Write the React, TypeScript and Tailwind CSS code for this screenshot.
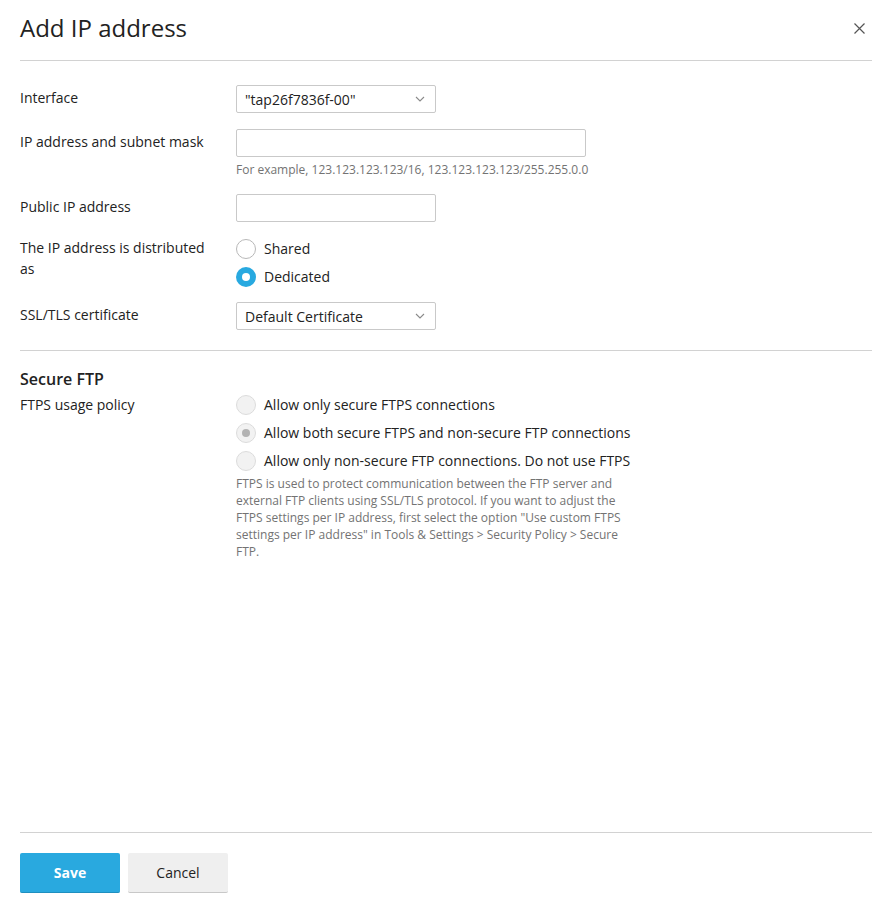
import React from "react";

const font = { fontFamily: '"Open Sans", "Noto Sans", sans-serif' };

function Chevron() {
  return (
    <svg width="10" height="6" viewBox="0 0 10 6" className="text-[#8a8a8a]">
      <path d="M1 1l4 4 4-4" fill="none" stroke="currentColor" strokeWidth="1.1" />
    </svg>
  );
}

function Select({ value }: { value: string }) {
  return (
    <div className="w-[200px] h-[28px] border border-[#c9c9c9] rounded-[2px] bg-white flex items-center justify-between pl-2 pr-[10px] text-[14px] text-[#222]">
      <span>{value}</span>
      <Chevron />
    </div>
  );
}

function Radio({ state }: { state: "off" | "on" | "disabled" | "disabledOn" }) {
  if (state === "on") {
    return (
      <span className="w-5 h-5 rounded-full bg-[#28a9e0] flex items-center justify-center shrink-0">
        <span className="w-[8px] h-[8px] rounded-full bg-white" />
      </span>
    );
  }
  if (state === "off") {
    return <span className="w-5 h-5 rounded-full border border-[#b8b8b8] bg-white shrink-0" />;
  }
  return (
    <span className="w-5 h-5 rounded-full border border-[#dcdcdc] bg-[#f2f2f2] flex items-center justify-center shrink-0">
      {state === "disabledOn" && <span className="w-[8px] h-[8px] rounded-full bg-[#b3b3b3]" />}
    </span>
  );
}

function RadioRow({ state, label }: { state: "off" | "on" | "disabled" | "disabledOn"; label: string }) {
  return (
    <div className="flex items-center h-5 gap-[8px] text-[14px] text-[#222]">
      <Radio state={state} />
      <span className="leading-5">{label}</span>
    </div>
  );
}

export default function App() {
  return (
    <div style={font} className="h-[904px] w-[878px] bg-white flex flex-col pl-5 pr-[6px] text-[#222]">
      <div className="flex items-start justify-between pt-3 pb-4 border-b border-[#d2d2d2]">
        <h1 className="text-[24px] leading-[32px] font-normal">Add IP address</h1>
        <button className="mt-[11px] mr-[7px] text-[#555]" aria-label="Close">
          <svg width="11" height="11" viewBox="0 0 11 11">
            <path d="M0.5 0.5l10 10M10.5 0.5l-10 10" stroke="currentColor" strokeWidth="1.2" fill="none" />
          </svg>
        </button>
      </div>

      <div className="flex-1 flex flex-col">
        <div className="flex flex-col gap-4 pt-6 pb-5 border-b border-[#d2d2d2] text-[14px]">
          <div className="flex">
            <div className="w-[216px] pt-[2px] leading-[21px]">Interface</div>
            <Select value={'"tap26f7836f-00"'} />
          </div>
          <div className="flex">
            <div className="w-[216px] pt-[2px] leading-[21px]">IP address and subnet mask</div>
            <div className="flex flex-col">
              <div className="w-[350px] h-[28px] border border-[#c9c9c9] rounded-[2px] bg-white" />
              <div className="text-[12px] leading-[16px] text-[#737373] mt-[5px]">
                For example, 123.123.123.123/16, 123.123.123.123/255.255.0.0
              </div>
            </div>
          </div>
          <div className="flex">
            <div className="w-[216px] pt-[2px] leading-[21px]">Public IP address</div>
            <div className="w-[200px] h-[28px] border border-[#c9c9c9] rounded-[2px] bg-white" />
          </div>
          <div className="flex">
            <div className="w-[216px] leading-[21px] -mt-[1px] pr-6">The IP address is distributed as</div>
            <div className="flex flex-col gap-2 pt-[1px]">
              <RadioRow state="off" label="Shared" />
              <RadioRow state="on" label="Dedicated" />
            </div>
          </div>
          <div className="flex -mt-[1px]">
            <div className="w-[216px] pt-[2px] leading-[21px]">SSL/TLS certificate</div>
            <Select value="Default Certificate" />
          </div>
        </div>

        <div className="pt-4 text-[14px]">
          <h2 className="text-[16px] leading-[24px] font-semibold mb-1">Secure FTP</h2>
          <div className="flex">
            <div className="w-[216px] leading-[20px]">FTPS usage policy</div>
            <div className="flex flex-col">
              <div className="flex flex-col gap-2">
                <RadioRow state="disabled" label="Allow only secure FTPS connections" />
                <RadioRow state="disabledOn" label="Allow both secure FTPS and non-secure FTP connections" />
                <RadioRow state="disabled" label="Allow only non-secure FTP connections. Do not use FTPS" />
              </div>
              <p className="w-[400px] mt-[4px] text-[12px] leading-[17px] text-[#737373]">
                FTPS is used to protect communication between the FTP server and external FTP clients using
                SSL/TLS protocol. If you want to adjust the FTPS settings per IP address, first select the option
                "Use custom FTPS settings per IP address" in Tools &amp; Settings &gt; Security Policy &gt; Secure
                FTP.
              </p>
            </div>
          </div>
        </div>
      </div>

      <div className="border-t border-[#d2d2d2] pt-5 pb-[11px] flex gap-2">
        <button className="w-[100px] h-[40px] rounded-[2px] bg-[#29a9df] border-b border-[#1f8fbf] text-white text-[14px] font-bold">
          Save
        </button>
        <button className="w-[100px] h-[40px] rounded-[2px] bg-[#efefef] border-b border-[#c8c8c8] text-[#222] text-[14px]">
          Cancel
        </button>
      </div>
    </div>
  );
}
